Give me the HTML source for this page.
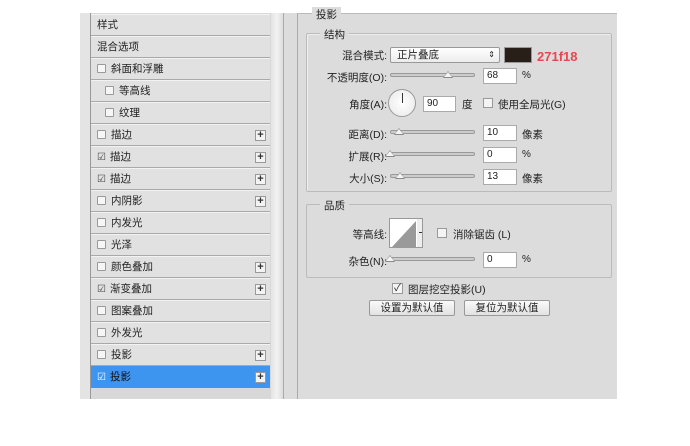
<!DOCTYPE html>
<html><head><meta charset="utf-8"><style>
*{box-sizing:border-box;margin:0;padding:0}
body{width:690px;height:446px;background:#fff;position:relative;overflow:hidden;font-family:"Liberation Sans","Noto Sans CJK SC",sans-serif;font-size:10.5px;color:#222}
.a{position:absolute}
.row{position:absolute;left:91px;width:179px;height:22px;border-bottom:1px solid #a9a9a9;border-top:1px solid #f2f2f2;background:#e1e1e1;line-height:20px;padding-left:6px}
.cb{display:inline-block;width:9px;height:9px;border:1px solid #9a9a9a;background:#f6f6f6;vertical-align:-1px;margin-right:5px;border-radius:1px}
.chk{font-size:10px;color:#444;margin-right:4px}
.plus{position:absolute;right:4px;top:5px;width:11px;height:11px;border:1px solid #999;background:#f3f3f3;font-size:11px;line-height:9px;text-align:center;font-weight:bold;color:#333}
.lbl{position:absolute;text-align:right;width:90px}
.inp{position:absolute;background:#fff;border:1px solid #aaa;height:16px;padding-left:3px;line-height:14px;font-size:10px}
.trk{position:absolute;height:4px;border:1px solid #999;background:#ccc;border-radius:2px;width:85px}
.thumb{position:absolute;width:0;height:0;border-left:5px solid transparent;border-right:5px solid transparent;border-bottom:7px solid #888}
.thumb:after{content:"";position:absolute;left:-4px;top:1px;border-left:4px solid transparent;border-right:4px solid transparent;border-bottom:5px solid #f4f4f4}
.btn{position:absolute;height:16px;border:1px solid #999;background:linear-gradient(#fafafa,#e2e2e2);text-align:center;line-height:14px;border-radius:2px}
</style></head><body>
<div class="a" style="left:80px;top:13px;width:537px;height:386px;background:#dcdcdc"></div>
<div class="a" style="left:80px;top:13px;width:10px;height:386px;background:#e4e4e4"></div>
<div class="a" style="left:90px;top:13px;width:181px;height:386px;background:#d8d8d8;border-left:1px solid #999"></div>
<div class="a" style="left:271px;top:13px;width:12px;height:386px;background:linear-gradient(90deg,#e4e4e4,#f2f2f2,#dcdcdc)"></div>
<div class="a" style="left:283px;top:13px;width:1px;height:386px;background:#aaa"></div>

<div class="row" style="top:14px">样式</div>
<div class="row" style="top:36px">混合选项</div>
<div class="row" style="top:58px"><span class="cb"></span>斜面和浮雕</div>
<div class="row" style="top:80px;padding-left:14px"><span class="cb"></span>等高线</div>
<div class="row" style="top:102px;padding-left:14px"><span class="cb"></span>纹理</div>
<div class="row" style="top:124px"><span class="cb"></span>描边<span class="plus">+</span></div>
<div class="row" style="top:146px"><span class="chk">☑</span>描边<span class="plus">+</span></div>
<div class="row" style="top:168px"><span class="chk">☑</span>描边<span class="plus">+</span></div>
<div class="row" style="top:190px"><span class="cb"></span>内阴影<span class="plus">+</span></div>
<div class="row" style="top:212px"><span class="cb"></span>内发光</div>
<div class="row" style="top:234px"><span class="cb"></span>光泽</div>
<div class="row" style="top:256px"><span class="cb"></span>颜色叠加<span class="plus">+</span></div>
<div class="row" style="top:278px"><span class="chk">☑</span>渐变叠加<span class="plus">+</span></div>
<div class="row" style="top:300px"><span class="cb"></span>图案叠加</div>
<div class="row" style="top:322px"><span class="cb"></span>外发光</div>
<div class="row" style="top:344px"><span class="cb"></span>投影<span class="plus">+</span></div>
<div class="row" style="top:366px;background:#3d95f0;color:#111;border-color:#3d95f0"><span class="chk" style="color:#fff">☑</span>投影<span class="plus">+</span></div>

<div class="a" style="left:297px;top:13px;width:320px;height:386px;border-left:1px solid #aaa;border-top:1px solid #bbb"></div>
<div class="a" style="left:312px;top:7px;background:#dcdcdc;padding:0 4px">投影</div>
<div class="a" style="left:306px;top:33px;width:306px;height:159px;border:1px solid #bbb;border-radius:2px;box-shadow:inset 1px 1px 0 #eee"></div>
<div class="a" style="left:320px;top:27px;background:#dcdcdc;padding:0 4px">结构</div>

<div class="lbl" style="left:297px;top:48px">混合模式:</div>
<div class="a" style="left:390px;top:47px;width:110px;height:16px;border:1px solid #999;background:linear-gradient(#fff,#ececec);padding-left:6px;line-height:14px;border-radius:2px">正片叠底<span style="position:absolute;right:4px;font-size:8px">⇕</span></div>
<div class="a" style="left:504px;top:47px;width:28px;height:16px;background:#271f18;border:1px solid #999"></div>
<div class="a" style="left:537px;top:49px;color:#e8474f;font-weight:bold;font-size:13px">271f18</div>

<div class="lbl" style="left:297px;top:70px">不透明度(O):</div>
<div class="trk" style="left:390px;top:73px"></div><div class="thumb" style="left:443px;top:71px"></div>
<div class="inp" style="left:483px;top:68px;width:34px">68</div><div class="a" style="left:522px;top:70px;font-size:10px">%</div>

<div class="lbl" style="left:297px;top:97px">角度(A):</div>
<div class="a" style="left:388px;top:89px;width:28px;height:28px;border-radius:50%;border:1px solid #999;background:radial-gradient(#fff,#e8e8e8)"></div>
<div class="a" style="left:402px;top:93px;width:1px;height:10px;background:#333"></div>
<div class="inp" style="left:423px;top:96px;width:33px">90</div><div class="a" style="left:462px;top:97px">度</div>
<div class="a" style="left:483px;top:98px;width:10px;height:10px;border:1px solid #999;background:#f4f4f4"></div>
<div class="a" style="left:498px;top:97px">使用全局光(G)</div>

<div class="lbl" style="left:297px;top:127px">距离(D):</div>
<div class="trk" style="left:390px;top:130px"></div><div class="thumb" style="left:394px;top:128px"></div>
<div class="inp" style="left:483px;top:125px;width:34px">10</div><div class="a" style="left:522px;top:127px">像素</div>

<div class="lbl" style="left:297px;top:149px">扩展(R):</div>
<div class="trk" style="left:390px;top:152px"></div><div class="thumb" style="left:385px;top:150px"></div>
<div class="inp" style="left:483px;top:147px;width:34px">0</div><div class="a" style="left:522px;top:149px;font-size:10px">%</div>

<div class="lbl" style="left:297px;top:171px">大小(S):</div>
<div class="trk" style="left:390px;top:174px"></div><div class="thumb" style="left:395px;top:172px"></div>
<div class="inp" style="left:483px;top:169px;width:34px">13</div><div class="a" style="left:522px;top:171px">像素</div>

<div class="a" style="left:306px;top:204px;width:306px;height:74px;border:1px solid #bbb;border-radius:2px"></div>
<div class="a" style="left:320px;top:198px;background:#dcdcdc;padding:0 4px">品质</div>
<div class="lbl" style="left:297px;top:227px">等高线:</div>
<div class="a" style="left:389px;top:218px;width:34px;height:30px;border:1px solid #999;background:#fff;overflow:hidden"><svg width="34" height="30"><polygon points="2,28 26,2 26,28" fill="#9a9a9a"/><rect x="27" y="0" width="7" height="30" fill="#eee"/><rect x="29" y="13" width="3" height="1" fill="#333"/></svg></div>
<div class="a" style="left:437px;top:228px;width:10px;height:10px;border:1px solid #999;background:#f4f4f4"></div>
<div class="a" style="left:453px;top:227px">消除锯齿 (L)</div>
<div class="lbl" style="left:297px;top:254px">杂色(N):</div>
<div class="trk" style="left:390px;top:257px"></div><div class="thumb" style="left:385px;top:255px"></div>
<div class="inp" style="left:483px;top:252px;width:34px">0</div><div class="a" style="left:522px;top:254px;font-size:10px">%</div>

<div class="a" style="left:392px;top:283px;width:11px;height:11px;border:1px solid #999;background:#f4f4f4;font-size:10px;line-height:9px;text-align:center">✓</div>
<div class="a" style="left:408px;top:282px">图层挖空投影(U)</div>
<div class="btn" style="left:369px;top:300px;width:86px">设置为默认值</div>
<div class="btn" style="left:464px;top:300px;width:86px">复位为默认值</div>
</body></html>
